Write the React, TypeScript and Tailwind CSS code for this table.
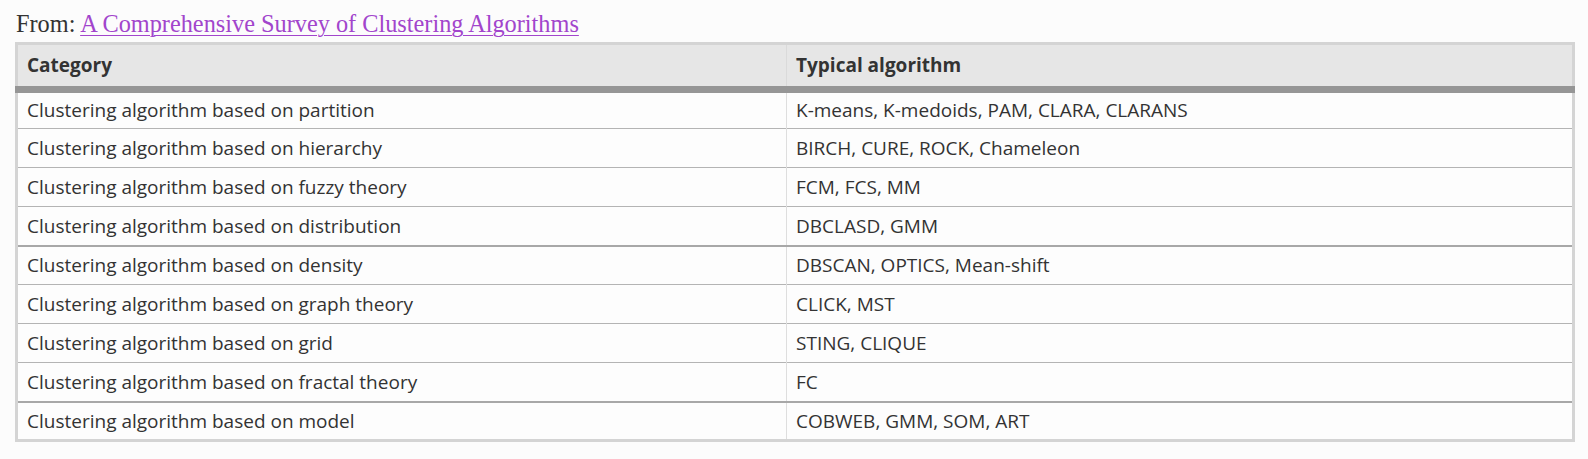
const rows: [string, string, boolean?][] = [
  ["Clustering algorithm based on partition", "K-means, K-medoids, PAM, CLARA, CLARANS"],
  ["Clustering algorithm based on hierarchy", "BIRCH, CURE, ROCK, Chameleon"],
  ["Clustering algorithm based on fuzzy theory", "FCM, FCS, MM"],
  ["Clustering algorithm based on distribution", "DBCLASD, GMM", true],
  ["Clustering algorithm based on density", "DBSCAN, OPTICS, Mean-shift"],
  ["Clustering algorithm based on graph theory", "CLICK, MST"],
  ["Clustering algorithm based on grid", "STING, CLIQUE"],
  ["Clustering algorithm based on fractal theory", "FC", true],
  ["Clustering algorithm based on model", "COBWEB, GMM, SOM, ART"],
];

export default function App() {
  return (
    <div className="min-h-[459px] bg-[#fcfcfc] px-[15px] pt-[9px]">
      {/* caption */}
      <p className="pl-px font-['Georgia','Liberation_Serif',serif] text-[24.3px] leading-[30px] text-[#333]">
        From:{" "}
        <a href="#" className="text-[#a245cc] underline underline-offset-[3px] decoration-1">
          A Comprehensive Survey of Clustering Algorithms
        </a>
      </p>

      {/* table */}
      <table className="mt-[3px] w-[1560px] border-collapse border-[3px] border-[#d4d4d4] font-['Segoe_UI','Open_Sans',sans-serif] text-[19px] text-[#333]">
        <thead>
          <tr className="h-[46px] bg-[#e6e6e6] border-b-[7px] border-[#969696]">
            <th className="w-[770px] border-r border-[#dadada] px-[9px] text-left font-bold">Category</th>
            <th className="px-[9px] text-left font-bold">Typical algorithm</th>
          </tr>
        </thead>
        <tbody className="bg-[#fdfdfd]">
          {rows.map(([cat, alg, thick], i) => (
            <tr
              key={cat}
              className={
                i === rows.length - 1
                  ? "h-[39px]"
                  : thick
                    ? "h-[39px] border-b-2 border-[#a8a8a8]"
                    : "h-[39px] border-b border-[#b4b4b4]"
              }
            >
              <td className="border-r border-[#dedede] px-[9px]">{cat}</td>
              <td className="px-[9px]">{alg}</td>
            </tr>
          ))}
        </tbody>
      </table>
    </div>
  );
}
